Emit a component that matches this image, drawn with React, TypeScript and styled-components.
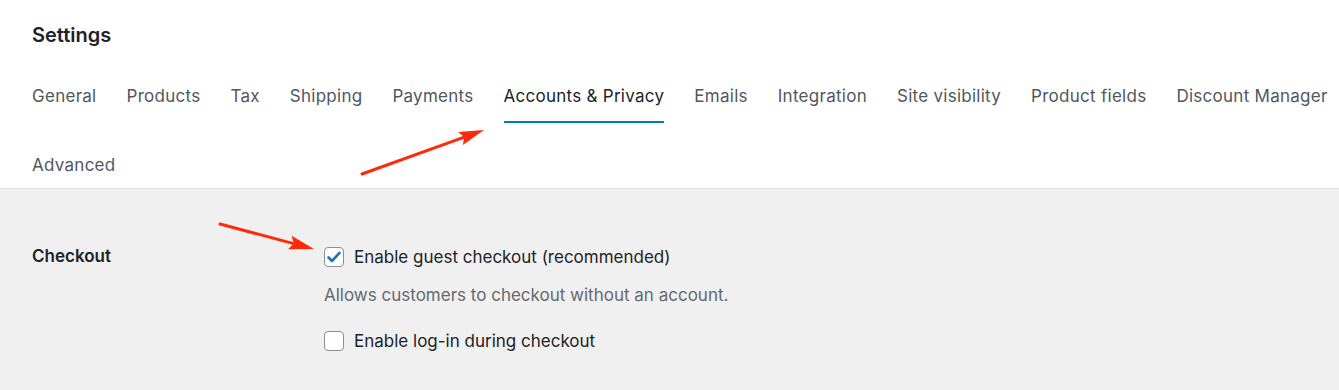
import styled, { createGlobalStyle } from 'styled-components';

const GlobalStyle = createGlobalStyle`
  html, body {
    margin: 0;
    padding: 0;
    background: #f0f0f1;
  }
  body {
    font-family: Inter, "Noto Sans", sans-serif;
    -webkit-font-smoothing: antialiased;
  }
`;

const tabs = [
  'General',
  'Products',
  'Tax',
  'Shipping',
  'Payments',
  'Accounts & Privacy',
  'Emails',
  'Integration',
  'Site visibility',
  'Product fields',
  'Discount Manager',
  'Advanced',
];

const ACTIVE = 'Accounts & Privacy';

type Arrow = { x1: number; y1: number; x2: number; y2: number };

const arrows: Arrow[] = [
  { x1: 362, y1: 174, x2: 484, y2: 130 },
  { x1: 220, y1: 224, x2: 314, y2: 249 },
];

const ArrowShape = ({ x1, y1, x2, y2 }: Arrow) => {
  const angle = Math.atan2(y2 - y1, x2 - x1);
  const len = 25;
  const half = 7;
  const bx = x2 - Math.cos(angle) * len;
  const by = y2 - Math.sin(angle) * len;
  const px = -Math.sin(angle) * half;
  const py = Math.cos(angle) * half;
  const sx = x2 - Math.cos(angle) * (len - 4);
  const sy = y2 - Math.sin(angle) * (len - 4);
  return (
    <g>
      <line x1={x1} y1={y1} x2={sx} y2={sy} stroke="#ff2a0a" strokeWidth={3} strokeLinecap="round" />
      <polygon
        points={`${x2},${y2} ${bx + px},${by + py} ${sx},${sy} ${bx - px},${by - py}`}
        fill="#ff2a0a"
      />
    </g>
  );
};

const App = () => {
  return (
    <Page>
      <GlobalStyle />
      <Header>
        <Title>Settings</Title>
        <TabNav>
          {tabs.map((t) => (
            <Tab key={t} $active={t === ACTIVE}>
              {t}
            </Tab>
          ))}
        </TabNav>
      </Header>
      <Body>
        <FieldRow>
          <FieldLabel>Checkout</FieldLabel>
          <FieldControls>
            <CheckRow>
              <Box $checked>
                <svg width="14" height="12" viewBox="0 0 14 12">
                  <path d="M1.5 6.5 L5 10 L12.5 1.8" fill="none" stroke="#2271b1" strokeWidth="2.6" strokeLinecap="round" strokeLinejoin="round" />
                </svg>
              </Box>
              <CheckText>Enable guest checkout (recommended)</CheckText>
            </CheckRow>
            <Description>Allows customers to checkout without an account.</Description>
            <CheckRow>
              <Box />
              <CheckText>Enable log-in during checkout</CheckText>
            </CheckRow>
          </FieldControls>
        </FieldRow>
      </Body>
      <Overlay width="1339" height="390" viewBox="0 0 1339 390">
        {arrows.map((a, i) => (
          <ArrowShape key={i} {...a} />
        ))}
      </Overlay>
    </Page>
  );
};

const Page = styled.div`
  position: relative;
  width: 1339px;
  height: 390px;
  overflow: hidden;
  background: #f0f0f1;
`;

const Header = styled.div`
  box-sizing: border-box;
  height: 189px;
  background: #fff;
  border-bottom: 1px solid #e2e2e4;
  padding: 24px 0 0 32px;
`;

const Title = styled.h1`
  margin: 0;
  font-size: 20px;
  line-height: 22px;
  font-weight: 600;
  color: #1d2327;
`;

const TabNav = styled.nav`
  display: flex;
  flex-wrap: wrap;
  column-gap: 30px;
  row-gap: 32px;
  margin-top: 40px;
`;

const Tab = styled.div<{ $active?: boolean }>`
  font-size: 17px;
  line-height: 20px;
  letter-spacing: 0.27px;
  padding-bottom: 15px;
  border-bottom: 2px solid ${(p) => (p.$active ? '#007cba' : 'transparent')};
  color: ${(p) => (p.$active ? '#1d2327' : '#50575e')};
  font-weight: 400;
  white-space: nowrap;
`;

const Body = styled.div`
  padding: 57px 32px 0;
`;

const FieldRow = styled.div`
  display: grid;
  grid-template-columns: 292px 1fr;
`;

const FieldLabel = styled.div`
  font-size: 17px;
  font-weight: 600;
  line-height: 22px;
  color: #1d2327;
  margin-top: -1px;
`;

const FieldControls = styled.div`
  display: flex;
  flex-direction: column;
`;

const CheckRow = styled.label`
  display: flex;
  align-items: center;
  gap: 10px;
  height: 22px;
`;

const Box = styled.span<{ $checked?: boolean }>`
  box-sizing: border-box;
  width: 20px;
  height: 20px;
  border: 1px solid #8c8f94;
  border-radius: 4px;
  background: #fff;
  display: flex;
  align-items: center;
  justify-content: center;
`;

const CheckText = styled.span`
  font-size: 17px;
  color: #1d2327;
`;

const Description = styled.p`
  margin: 16px 0 24px;
  font-size: 17px;
  line-height: 22px;
  color: #646970;
`;

const Overlay = styled.svg`
  position: absolute;
  left: 0;
  top: 0;
  pointer-events: none;
`;

export default App;
